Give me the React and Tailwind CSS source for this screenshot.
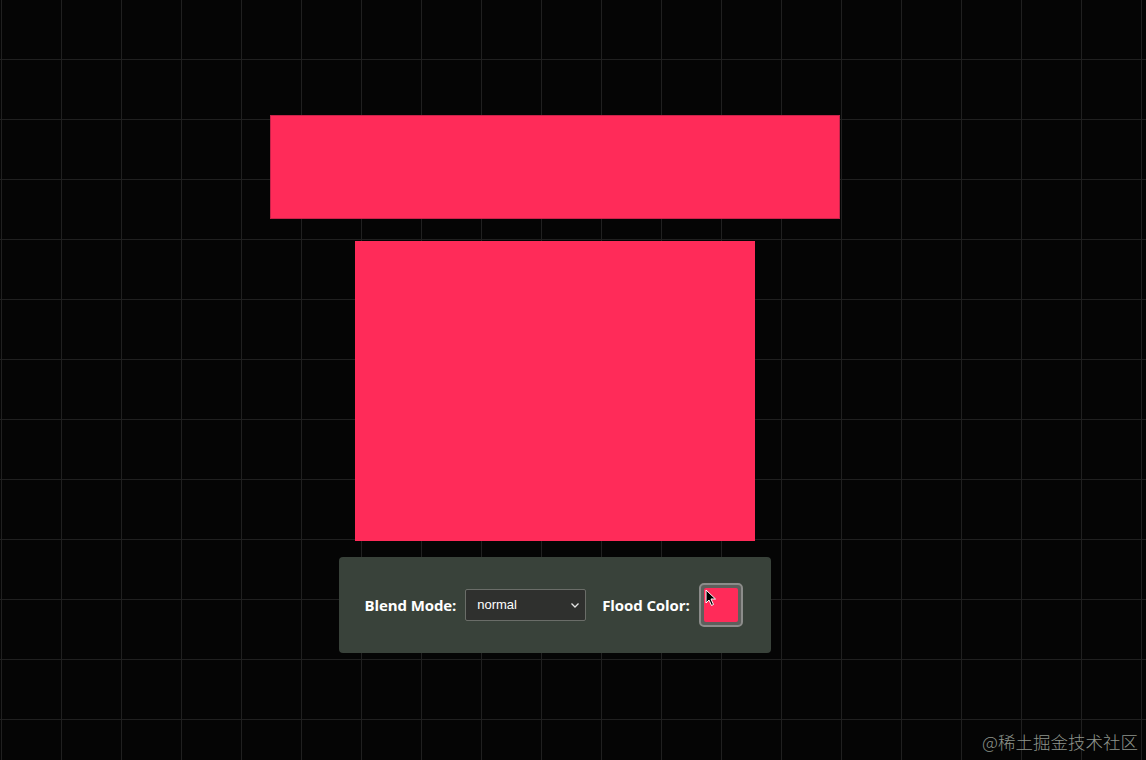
import React from 'react';

function Cursor() {
  return (
    <svg className="absolute left-[4px] top-[4px]" width="12" height="18" viewBox="0 0 12 18">
      <path d="M1 1 L1 14 L4 11 L6.5 16.5 L8.5 15.5 L6 10 L10.5 10 Z" fill="#000" stroke="#fff" strokeWidth="1" strokeLinejoin="round" />
    </svg>
  );
}

export default function App() {
  return (
    <div className="relative h-[760px] w-[1146px] overflow-hidden bg-[#050505] bg-[linear-gradient(to_right,#202020_1px,transparent_1px),linear-gradient(to_bottom,#202020_1px,transparent_1px)] bg-[size:60px_60px] bg-[position:1px_-1px] font-['Open_Sans',sans-serif]">
      <div className="flex w-[1109px] flex-col items-center pt-[115px]">
        {/* Rectangles */}
        <div className="h-[104px] w-[570px] border border-[#c8234a] bg-[#ff2b59]" />
        <div className="mt-[22px] h-[300px] w-[400px] bg-[#ff2b59]" />

        {/* Controls */}
        <div className="mt-[16px] flex h-[96px] w-[432px] items-center rounded-[4px] bg-[#39423a] pl-[26px]">
          <span className="text-[15px] font-bold tracking-[-0.1px] text-white">Blend Mode:</span>
          <div className="ml-[9px] flex h-[32px] w-[121px] items-center justify-between rounded-[2px] border border-[#6a6d68] bg-[#2f302e] pl-[11px] pr-[5px]">
            <span className="font-['Liberation_Sans',sans-serif] text-[13px] text-white">normal</span>
            <svg width="10" height="10" viewBox="0 0 10 10">
              <path d="M1.5 3.5 L5 7 L8.5 3.5" fill="none" stroke="#e5e5e5" strokeWidth="1.3" />
            </svg>
          </div>
          <span className="ml-[16px] text-[15px] font-bold tracking-[-0.1px] text-white">Flood Color:</span>
          <div className="relative ml-[9px] flex h-[44px] w-[44px] items-center justify-center rounded-[5px] border-2 border-[#8c8c8a] bg-[#5e5f5c]">
            <div className="h-[34px] w-[34px] rounded-[2px] bg-[#ff2b59]" />
            <Cursor />
          </div>
        </div>
      </div>

      {/* Watermark */}
      <div className="absolute right-[8px] top-[729px] font-['Noto_Sans_CJK_SC',sans-serif] text-[17.5px] font-light text-[#8e948c]">
        @稀土掘金技术社区
      </div>
    </div>
  );
}
